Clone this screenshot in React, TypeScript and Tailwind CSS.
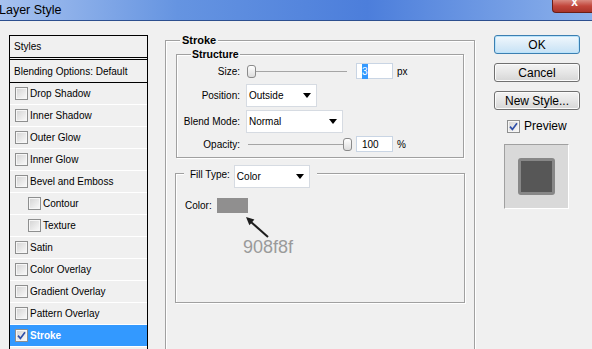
const effects = [
  { label: "Drop Shadow" },
  { label: "Inner Shadow" },
  { label: "Outer Glow" },
  { label: "Inner Glow" },
  { label: "Bevel and Emboss" },
  { label: "Contour", indent: true },
  { label: "Texture", indent: true },
  { label: "Satin" },
  { label: "Color Overlay" },
  { label: "Gradient Overlay" },
  { label: "Pattern Overlay" },
  { label: "Stroke", selected: true },
];

function Check({ checked }: { checked?: boolean }) {
  return (
    <span className="flex h-[13px] w-[13px] shrink-0 items-center justify-center border border-[#8e8f8f] bg-[linear-gradient(135deg,#d2d2d2,#fbfbfb)] shadow-[inset_0_0_0_1px_#f6f6f6]">
      {checked && (
        <svg width="9" height="9" viewBox="0 0 9 9">
          <path d="M1 4.6 L3.4 7.4 L8 1.2" fill="none" stroke="#2f4fa8" strokeWidth="1.7" />
        </svg>
      )}
    </span>
  );
}

function Dropdown({ value, width }: { value: string; width: string }) {
  return (
    <div className={`flex h-[23px] ${width} items-center justify-between border border-[#d6dbe2] bg-white pl-[2px] pr-[5px] text-[10px]`}>
      <span>{value}</span>
      <svg width="8" height="5" viewBox="0 0 8 5">
        <path d="M0 0 H8 L4 5 Z" fill="#000" />
      </svg>
    </div>
  );
}

function Slider({ thumb }: { thumb: string }) {
  return (
    <div className="relative h-[16px] w-[101px]">
      <div className="absolute left-[2px] right-0 top-[8px] h-[2px] border-t border-[#a5a5a5] border-b-white" />
      <div className={`absolute top-[2px] ${thumb} h-[13px] w-[9px] rounded-[3px] border border-[#8a8a8a] bg-[linear-gradient(#ffffff,#dcdcdc)]`} />
    </div>
  );
}

function NumBox({ children }: { children: React.ReactNode }) {
  return (
    <div className="ml-[9px] flex h-[16px] w-[37px] items-center border border-[#c9d5e4] bg-white pl-[5px] text-[10px]">
      {children}
    </div>
  );
}

function Button({ children, primary }: { children: React.ReactNode; primary?: boolean }) {
  return (
    <div
      className={`flex h-[19px] w-[86px] items-center justify-center rounded-[3px] border text-[12px] ${
        primary
          ? "border-[#3c7fb1] bg-[linear-gradient(#f0f8fd,#dcecf8_50%,#c6e2f6)] shadow-[inset_0_0_0_1px_#b9e3fb]"
          : "border-[#707070] bg-[linear-gradient(#f3f3f3,#e6e6e6_50%,#d6d6d6)] shadow-[inset_0_0_0_1px_#fbfbfb]"
      }`}
    >
      {children}
    </div>
  );
}

export default function App() {
  return (
    <div className="h-[349px] w-[592px] overflow-hidden bg-[#f0f0f0] font-['Liberation_Sans',Arial,sans-serif] text-black">
      {/* title bar */}
      <div className="flex h-[21px] items-start justify-between border-b border-[#2c4f8e] bg-[linear-gradient(to_right,#a7c2ef,#6594e1_30%,#4c7edb_62%,#8cb1eb)]">
        <span className="ml-[-1px] mt-[3px] text-[12.5px] leading-[15px]">Layer Style</span>
        <div className="flex h-[13px] w-[40px] items-start justify-center rounded-bl-[4px] border border-t-0 border-r-0 border-[#6b1e17] bg-[linear-gradient(#d98a80,#c2463b_50%,#a9342a)] pl-[4px]">
          <span className="mt-[-5px] text-[12px] font-bold leading-[14px] text-white">x</span>
        </div>
      </div>

      <div className="flex">
        {/* styles list */}
        <div className="ml-[9px] mt-[14px] h-[320px] w-[139px] shrink-0 border border-b-0 border-black text-[10px]">
          <div className="flex h-[21px] items-center pl-[4px]">Styles</div>
          <div className="h-[3px] border-y border-black" />
          <div className="flex h-[23px] items-center border-b border-black pl-[4px]">
            Blending Options: Default
          </div>
          {effects.map((e) => (
            <div
              key={e.label}
              className={`flex h-[22px] items-center gap-[2px] border-b border-white ${
                e.indent ? "pl-[18px]" : "pl-[5px]"
              } ${e.selected ? "bg-[#3399ff] font-bold text-white" : ""}`}
            >
              <Check checked={e.selected} />
              <span>{e.label}</span>
            </div>
          ))}
        </div>

        {/* stroke group */}
        <div className="relative ml-[17px] mt-[19px] h-[320px] w-[310px] shrink-0 border border-b-0 border-[#a0a0a0] shadow-[1px_1px_0_#fff,inset_1px_1px_0_#fff]">
          <span className="absolute left-[14px] top-[-7px] bg-[#f0f0f0] px-[2px] text-[11px] font-bold leading-[13px]">
            Stroke
          </span>

          {/* structure */}
          <div className="relative mx-[10px] mt-[13px] border border-[#a0a0a0] pb-[5px] pt-[8px] shadow-[1px_1px_0_#fff,inset_1px_1px_0_#fff]">
            <span className="absolute left-[14px] top-[-7px] bg-[#f0f0f0] px-[1px] text-[10.5px] font-bold leading-[13px]">
              Structure
            </span>
            <div className="grid grid-cols-[63px_auto] items-center gap-x-[6px] text-[10px]">
              <span className="text-right">Size:</span>
              <div className="flex h-[16px] items-center">
                <Slider thumb="left-[1px]" />
                <NumBox>
                  <span className="bg-[#3399ff] text-white">3</span>
                </NumBox>
                <span className="ml-[4px]">px</span>
              </div>

              <span className="mt-[5px] text-right">Position:</span>
              <div className="mt-[5px]">
                <Dropdown value="Outside" width="w-[71px]" />
              </div>

              <span className="mt-[3px] text-right">Blend Mode:</span>
              <div className="mt-[3px]">
                <Dropdown value="Normal" width="w-[97px]" />
              </div>

              <span className="mt-[3px] text-right">Opacity:</span>
              <div className="mt-[3px] flex h-[16px] items-center">
                <Slider thumb="left-[97px]" />
                <NumBox>100</NumBox>
                <span className="ml-[4px]">%</span>
              </div>
            </div>
          </div>

          {/* fill type */}
          <div className="relative mx-[9px] mt-[15px] h-[130px] border border-[#a0a0a0] pl-[9px] pt-[24px] text-[10px] shadow-[1px_1px_0_#fff,inset_1px_1px_0_#fff]">
            <div className="absolute left-[8px] top-[-9px] flex items-center gap-[4px] bg-[#f0f0f0] pl-[6px] pr-[7px]">
              <span className="mt-[-4px]">Fill Type:</span>
              <Dropdown value="Color" width="w-[76px]" />
            </div>
            <div className="flex items-center gap-[5px]">
              <span>Color:</span>
              <div className="h-[15px] w-[31px] bg-[#908f8f]" />
            </div>
            <svg className="absolute left-0 top-0" width="120" height="80" viewBox="0 0 120 80">
              <line x1="92" y1="63" x2="75" y2="48" stroke="#1e1e1e" strokeWidth="2" />
              <path d="M70 43 L78.4 45.6 L73.4 51.2 Z" fill="#1e1e1e" />
            </svg>
            <span className="absolute left-[67px] top-[64px] text-[18px] leading-none text-[#9a9a9a]">908f8f</span>
          </div>
        </div>

        {/* buttons */}
        <div className="ml-[19px] mt-[14px] flex w-[86px] shrink-0 flex-col gap-[9px]">
          <Button primary>OK</Button>
          <Button>Cancel</Button>
          <Button>New Style...</Button>
          <div className="ml-[13px] mt-[-2px] flex items-center gap-[4px] text-[12px]">
            <Check checked />
            <span>Preview</span>
          </div>
          <div className="ml-[10px] flex h-[65px] w-[65px] items-center justify-center border border-[#a0a0a0] border-b-white border-r-white bg-[#d9d9d9]">
            <div className="h-[37px] w-[37px] rounded-[3px] border-[3px] border-[#878787] bg-[#575757]" />
          </div>
        </div>
      </div>
    </div>
  );
}
